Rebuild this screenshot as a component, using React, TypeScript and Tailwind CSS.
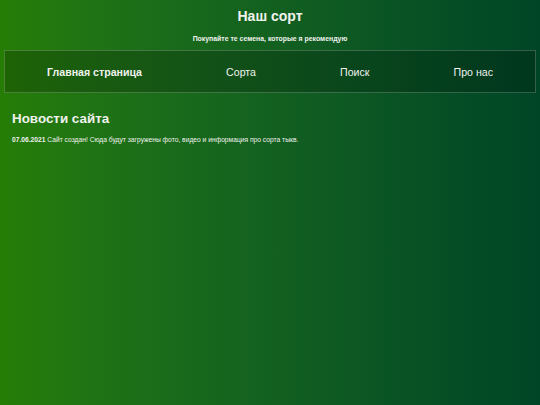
const links = ["Главная страница", "Сорта", "Поиск", "Про нас"];

export default function App() {
  return (
    <div className="min-h-[405px] w-full bg-gradient-to-r from-[#267d05] to-[#004526] font-['Liberation_Sans',Arial,sans-serif] text-[#f0f2ee]">
      <header className="flex flex-col items-center pt-[7px]">
        <h1 className="text-[14px] font-bold leading-[18px]">Наш сорт</h1>
        <p className="mt-[9px] text-[6.9px] font-bold leading-[9px]">Покупайте те семена, которые я рекомендую</p>
      </header>

      <nav className="mx-[4px] mt-[7px] flex h-[43px] items-center justify-around border border-white/20 bg-black/20">
        {links.map((l, i) => (
          <a key={l} href="#" className={`text-[10.6px] leading-[14px] ${i === 0 ? "font-bold" : ""}`}>
            {l}
          </a>
        ))}
      </nav>

      <main className="px-[12px] pt-[17px]">
        <h2 className="text-[13.4px] font-bold leading-[18px]">Новости сайта</h2>
        <p className="mt-[7px] text-[6.7px] leading-[9px]">
          <b>07.06.2021</b> Сайт создан! Сюда будут загружены фото, видео и информация про сорта тыкв.
        </p>
      </main>
    </div>
  );
}
